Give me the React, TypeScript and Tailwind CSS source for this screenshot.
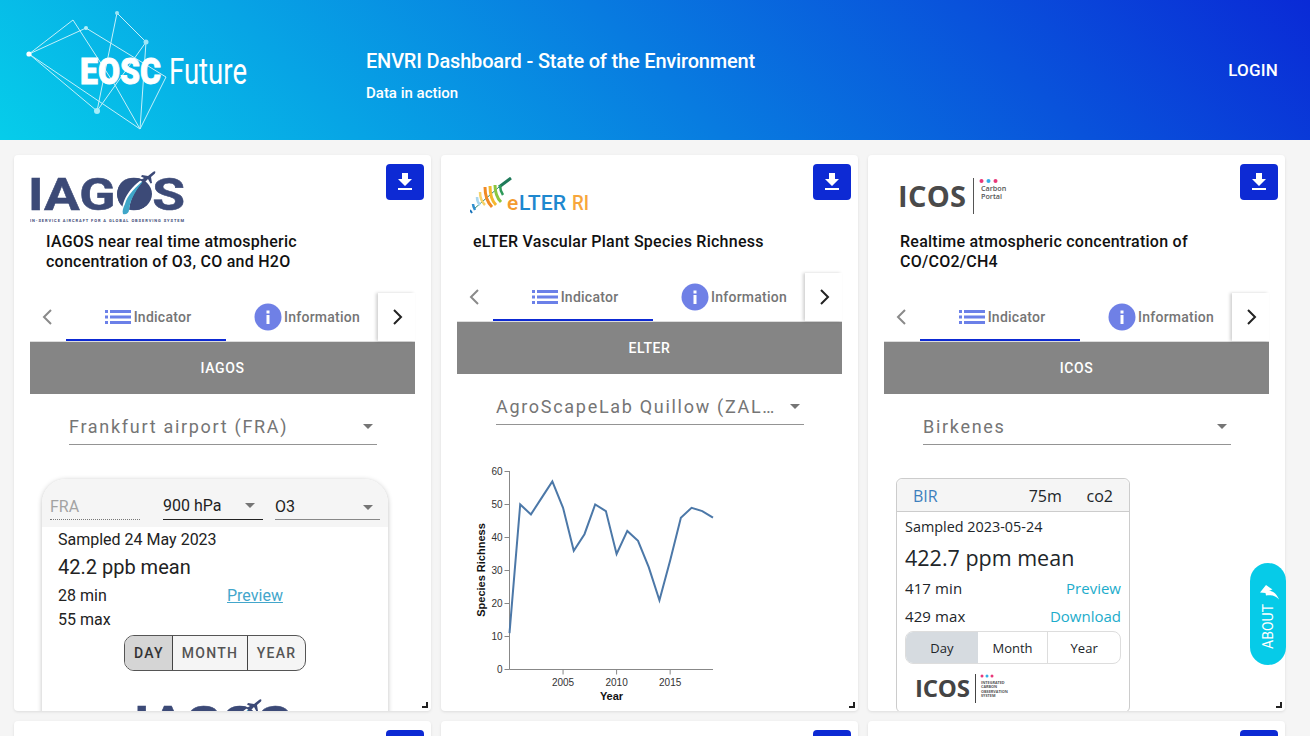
function DownloadButton() {
  return (
    <button className="absolute right-[7px] top-[9px] flex h-[36px] w-[38px] items-center justify-center rounded-[4px] bg-[#0d2ad4]">
      <svg width="24" height="24" viewBox="0 0 24 24" fill="#fff">
        <path d="M19 9h-4V3H9v6H5l7 7 7-7zM5 18v2h14v-2H5z" />
      </svg>
    </button>
  )
}

function EoscLogo() {
  const lines = [
    [29, 54, 73, 20], [29, 54, 86, 28], [29, 54, 97, 111], [29, 54, 140, 129],
    [73, 20, 115, 85], [115, 85, 140, 129], [86, 28, 166, 77], [166, 77, 140, 129],
    [117, 13, 146, 42], [117, 13, 97, 111], [146, 42, 97, 111], [146, 42, 140, 129],
  ]
  return (
    <svg width="366" height="140" className="shrink-0">
      {lines.map((l, i) => (
        <line key={i} x1={l[0]} y1={l[1]} x2={l[2]} y2={l[3]} stroke="#c4f0fa" strokeWidth="1" />
      ))}
      <circle cx="29" cy="54" r="2.6" fill="#fff" />
      <circle cx="86" cy="28" r="2" fill="#b5eef9" />
      <circle cx="117" cy="13" r="2" fill="#9fe5f6" />
      <circle cx="146" cy="42" r="2.5" fill="#9fe5f6" />
      <circle cx="97" cy="111" r="3" fill="#a7edf9" />
      <text x="80" y="84" fill="#fff" stroke="#fff" strokeWidth="0.8" fontFamily="Roboto" fontWeight="900" fontSize="36" textLength="81" lengthAdjust="spacingAndGlyphs">EOSC</text>
      <text x="169" y="84" fill="#fff" fontFamily="Roboto" fontWeight="400" fontSize="37" textLength="78" lengthAdjust="spacingAndGlyphs">Future</text>
    </svg>
  )
}

function IagosLogo() {
  return (
    <svg width="160" height="56" className="block">
      <text x="-2" y="41" fill="#3c4a77" stroke="#3c4a77" strokeWidth="0.5" fontFamily="Roboto" fontWeight="700" fontSize="44" textLength="157" lengthAdjust="spacingAndGlyphs">IAGOS</text>
      <ellipse cx="104.500" cy="25" rx="17.500" ry="16" fill="#3c4a77" />
      <path d="M117 8 C103 14 91 30 92 45 L99 43 C99 31 106 18 117 8Z" fill="#fff" />
      <path d="M116 9 C106 18 97 26 95 35 C93 39 92 42 93 45 C96 46 99 44 99 41 C100 30 107 19 116 9Z" fill="#3fa6c8" />
      <path d="M112 6 L118 7 L123 3 C125 1.500 126 2.500 125 4.500 L121 8 L122 14 L120.500 14.500 L118 10 L115 13 L115 15 L113.500 14.500 L112 12.500 L110 11.500 L114 9 L111 7.500Z" fill="#3c4a77" />
      <text x="0" y="53" fill="#3c4a77" fontFamily="Roboto" fontWeight="700" fontSize="4" textLength="154" lengthAdjust="spacing">IN-SERVICE AIRCRAFT FOR A GLOBAL OBSERVING SYSTEM</text>
    </svg>
  )
}

function ElterLogo() {
  return (
    <svg width="130" height="40" className="block">
      <path d="M41 1 L29 10" stroke="#1f7a5a" strokeWidth="3" fill="none" />
      <path d="M29 10 L4 32" stroke="#2a8a6a" strokeWidth="1" fill="none" />
      <path d="M30 8 C30 12 31 15 33 18" stroke="#2f9a5a" strokeWidth="2.500" fill="none" />
      <path d="M25 8 C25 15 27 21 31 25" stroke="#8cc63f" strokeWidth="3" fill="none" />
      <path d="M20 9 C20 17 22 24 26 28" stroke="#f5b82e" strokeWidth="3" fill="none" />
      <path d="M15 10 C15 19 18 26 22 30" stroke="#f08a24" strokeWidth="3" fill="none" />
      <path d="M10 15 C10 21 12 25 15 28" stroke="#f6d36a" strokeWidth="2.500" fill="none" />
      <path d="M7 20 C7 24 8 26 10 28" stroke="#a9d6ee" strokeWidth="2.500" fill="none" />
      <path d="M3 27 C3 29 4 31 5 33" stroke="#2f8fcf" strokeWidth="2.500" fill="none" />
      <path d="M0 33 L2 36" stroke="#1b75bb" strokeWidth="2" />
      <text x="37" y="32.500" fontFamily="Roboto" fontWeight="500" fontSize="21" fill="#f39a2e">e</text>
      <text x="49" y="32.500" fontFamily="Roboto" fontWeight="500" fontSize="21" fill="#1e88cf" textLength="47" lengthAdjust="spacingAndGlyphs">LTER</text>
      <text x="102" y="32.500" fontFamily="Roboto" fontWeight="500" fontSize="21" fill="#f7a63c" textLength="17" lengthAdjust="spacingAndGlyphs">RI</text>
    </svg>
  )
}

function IcosLogo() {
  return (
    <svg width="130" height="44" className="block">
      <text x="0" y="30" fontFamily="Open Sans" fontWeight="700" fontSize="29" fill="#4a4a4a" textLength="68" lengthAdjust="spacing">ICOS</text>
      <line x1="75.500" y1="1" x2="75.500" y2="37" stroke="#555" strokeWidth="1" />
      <circle cx="83.500" cy="4" r="2" fill="#e8387a" />
      <circle cx="90.500" cy="4" r="2" fill="#35aee8" />
      <circle cx="97.500" cy="4" r="2" fill="#e8387a" />
      <text x="83" y="13.500" fontFamily="Open Sans" fontWeight="600" fontSize="7.200" fill="#555">Carbon</text>
      <text x="83" y="21.500" fontFamily="Open Sans" fontWeight="600" fontSize="7.200" fill="#555">Portal</text>
    </svg>
  )
}

function IcosSmallLogo() {
  return (
    <svg width="110" height="34" className="block">
      <text x="0" y="24" fontFamily="Open Sans" fontWeight="700" fontSize="24" fill="#444" textLength="55" lengthAdjust="spacing">ICOS</text>
      <line x1="60.500" y1="1" x2="60.500" y2="30" stroke="#444" strokeWidth="1" />
      <circle cx="67" cy="3" r="1.500" fill="#e8387a" />
      <circle cx="72" cy="3" r="1.500" fill="#35aee8" />
      <circle cx="77" cy="3" r="1.500" fill="#e8387a" />
      {["INTEGRATED", "CARBON", "OBSERVATION", "SYSTEM"].map((t, i) => (
        <text key={t} x="66" y={10.500 + i * 4.500} fontFamily="Open Sans" fontWeight="700" fontSize="3.800" fill="#555">{t}</text>
      ))}
    </svg>
  )
}

function Tabs() {
  return (
    <div className="flex h-[49px] items-stretch border-b border-[#ddd] text-[14px] font-medium tracking-[0.25px] text-[#757575]">
      <div className="flex w-[36px] items-center justify-center">
        <svg width="24" height="24" viewBox="0 0 24 24" fill="none" stroke="#8a8a8a" strokeWidth="2"><path d="M15 5 L8 12 L15 19" /></svg>
      </div>
      <div className="flex w-[160px] items-center justify-center gap-[3px] border-b-2 border-[#0d2ad4] pl-[4px] pt-[2px]">
        <svg width="26" height="16" viewBox="0 0 26 16" fill="#6b80e8">
          <rect x="0" y="1" width="3" height="3" /><rect x="0" y="6.500" width="3" height="3" /><rect x="0" y="12" width="3" height="3" />
          <rect x="5" y="1" width="21" height="3" /><rect x="5" y="6.500" width="21" height="3" /><rect x="5" y="12" width="21" height="3" />
        </svg>
        Indicator
      </div>
      <div className="flex w-[152px] items-center justify-start gap-[2px] pl-[28px]">
        <svg width="28" height="28" viewBox="0 0 28 28" className="shrink-0">
          <circle cx="14" cy="14" r="13.500" fill="#6f80e6" />
          <rect x="12.500" y="12" width="3" height="9" fill="#fff" />
          <rect x="12.500" y="7.500" width="3" height="3" fill="#fff" />
        </svg>
        Information
      </div>
      <div className="flex w-[37px] items-center justify-center shadow-[-2px_0_3px_rgba(0,0,0,0.18)]">
        <svg width="24" height="24" viewBox="0 0 24 24" fill="none" stroke="#222" strokeWidth="2"><path d="M9 5 L16 12 L9 19" /></svg>
      </div>
    </div>
  )
}

function Caret({ color = "#757575" }: { color?: string }) {
  return (
    <svg width="10" height="5" viewBox="0 0 10 5" className="shrink-0"><path d="M0 0 L10 0 L5 5Z" fill={color} /></svg>
  )
}

function SiteSelect({ label }: { label: string }) {
  return (
    <div className="ml-[39px] mr-[38px] mt-[16px] flex h-[35px] items-center justify-between border-b border-[#949494] pb-[2px] pr-[4px] text-[18px] tracking-[1.7px] text-[#757575]">
      <span className="w-[280px] truncate">{label}</span>
      <Caret />
    </div>
  )
}

function Card({ logo, title, children }: { logo?: React.ReactNode; title?: React.ReactNode; children?: React.ReactNode }) {
  return (
    <div className="relative h-[556px] overflow-hidden rounded-[4px] bg-white px-[16px] shadow-[0_1px_3px_rgba(0,0,0,0.1)]">
      <DownloadButton />
      <div className="h-[77px]">{logo}</div>
      {title && (
        <div className="mb-[21px] w-[320px] pl-[16px] text-[16px] font-medium leading-[20px] tracking-[0.25px] text-[#111]">{title}</div>
      )}
      {children}
      <div className="absolute bottom-[3px] right-[3px] h-[6px] w-[6px] border-b-2 border-r-2 border-[#222]" />
    </div>
  )
}

function IagosWidget() {
  return (
    <div className="ml-[12px] mt-[34px] w-[346px] rounded-t-[24px] bg-white pb-[40px] text-[16px] text-[#222] shadow-[0_1px_5px_rgba(0,0,0,0.25)]">
      <div className="flex h-[48px] items-end rounded-t-[24px] bg-[#f5f5f5] pb-[7px]">
        <div className="ml-[8px] w-[90px] border-b border-dotted border-[#777] pb-[1px] leading-[22px] text-[#a3a3a3]">FRA</div>
        <div className="ml-[23px] flex w-[100px] items-center justify-between border-b border-[#222] pb-[2px] pr-[8px] leading-[23px]">
          900 hPa
          <Caret />
        </div>
        <div className="ml-[12px] flex w-[105px] items-center justify-between border-b border-[#888] pb-[1px] pr-[7px] leading-[22px]">
          O3
          <Caret />
        </div>
      </div>
      <div className="pl-[16px]">
        <div className="h-[24px] pt-[1px] leading-[24px]">Sampled 24 May 2023</div>
        <div className="h-[32px] text-[20px] leading-[32px]">42.2 ppb mean</div>
        <div className="flex h-[24px] pt-[1px] leading-[24px]">
          <span className="w-[169px]">28 min</span>
          <span className="text-[#43a6cb] underline">Preview</span>
        </div>
        <div className="h-[24px] pt-[1px] leading-[24px]">55 max</div>
      </div>
      <div className="mt-[4px] flex justify-center">
        <div className="flex h-[36px] overflow-hidden rounded-[10px] border border-[#555] bg-[#f5f5f5] text-[14px] font-medium tracking-[1.25px] text-[#555]">
          <span className="flex w-[48px] items-center justify-center border-r border-[#444] bg-[#d5d5d5] pl-[1px] text-[#333]">DAY</span>
          <span className="flex w-[75px] items-center justify-center border-r border-[#444]">MONTH</span>
          <span className="flex w-[57px] items-center justify-center">YEAR</span>
        </div>
      </div>
      <div className="ml-[94px] mt-[26px]">
        <IagosLogo />
      </div>
    </div>
  )
}

function IcosWidget() {
  return (
    <div className="ml-[12px] mt-[33px] h-[235px] w-[234px] rounded-[6px] border border-[#ccc] font-['Open_Sans',sans-serif] text-[14.400px] text-[#212529]">
      <div className="flex h-[33px] items-center rounded-t-[6px] border-b border-[#ccc] bg-[#f5f5f5] pl-[16px] pr-[16px] pt-[1px] text-[16px]">
        <span className="w-[116px] text-[#3d7fbd]">BIR</span>
        <span className="w-[58px]">75m</span>
        <span>co2</span>
      </div>
      <div className="px-[8px]">
        <div className="h-[30px] leading-[30px]">Sampled 2023-05-24</div>
        <div className="h-[31px] text-[21.500px] leading-[32px]">422.7 ppm mean</div>
        <div className="flex h-[30px] items-center justify-between text-[15px] leading-[24px]">
          <span className="tracking-[0.1px]">417 min</span>
          <span className="text-[#1caccb]">Preview</span>
        </div>
        <div className="flex h-[26px] items-center justify-between text-[15px] leading-[24px]">
          <span className="tracking-[0.1px]">429 max</span>
          <span className="text-[#1caccb]">Download</span>
        </div>
        <div className="mt-[2px] flex h-[33px] overflow-hidden rounded-[8px] border border-[#ddd] text-[13px]">
          <span className="flex w-[72px] items-center justify-center bg-[#d6dbe0] pt-[2px]">Day</span>
          <span className="flex w-[71px] items-center justify-center border-r border-[#ddd] pt-[2px]">Month</span>
          <span className="flex w-[72px] items-center justify-center pt-[2px]">Year</span>
        </div>
        <div className="ml-[10px] mt-[9px]">
          <IcosSmallLogo />
        </div>
      </div>
    </div>
  )
}

const richness = [11, 50, 47, 52, 57, 49, 36, 41, 50, 48, 35, 42, 39, 31, 21, 33, 46, 49, 48, 46]

function RichnessChart() {
  const x0 = 49.5
  const y0 = 219.5
  const pts = richness.map((v, i) => `${x0 + i * 10.71},${y0 - v * 3.3}`).join(" ")
  return (
    <svg width="270" height="260" className="ml-[3px] mt-[25px] block" fontFamily="Liberation Sans" fontSize="10" fill="#333">
      <line x1={x0} y1="21" x2={x0} y2={y0} stroke="#888" />
      <line x1={x0} y1={y0} x2="253" y2={y0} stroke="#888" />
      {[0, 10, 20, 30, 40, 50, 60].map((v) => (
        <g key={v}>
          <line x1={x0 - 5} x2={x0} y1={y0 - v * 3.3} y2={y0 - v * 3.3} stroke="#888" />
          <text x={x0 - 7} y={y0 - v * 3.3 + 3.5} textAnchor="end">{v}</text>
        </g>
      ))}
      {[2005, 2010, 2015].map((v) => (
        <g key={v}>
          <line x1={x0 + (v - 2000) * 10.71} x2={x0 + (v - 2000) * 10.71} y1={y0} y2={y0 + 5} stroke="#888" />
          <text x={x0 + (v - 2000) * 10.71} y={y0 + 16} textAnchor="middle">{v}</text>
        </g>
      ))}
      <polyline points={pts} fill="none" stroke="#4c78a8" strokeWidth="2" />
      <text x="151.500" y="250" textAnchor="middle" fontWeight="700" fontSize="11" fill="#111">Year</text>
      <text transform="translate(25,120) rotate(-90)" textAnchor="middle" fontWeight="700" fontSize="11" fill="#111">Species Richness</text>
    </svg>
  )
}

function Banner({ label }: { label: string }) {
  return (
    <div className="flex h-[52px] items-center justify-center bg-[#858585] text-[14px] font-medium tracking-[0.6px] text-white">{label}</div>
  )
}

export default function App() {
  return (
    <div className="relative h-[736px] overflow-hidden bg-[#f5f5f5] font-[Roboto,sans-serif]">
      <header className="flex h-[140px] items-center bg-[linear-gradient(45deg,#06cdea_0%,#0a2ad6_100%)] pr-[32px] text-white">
        <EoscLogo />
        <div className="pt-[11px]">
          <div className="text-[20px] font-medium leading-[24px] tracking-[-0.18px]">ENVRI Dashboard - State of the Environment</div>
          <div className="mt-[10px] text-[15px] font-medium leading-[20px]">Data in action</div>
        </div>
        <div className="ml-auto text-[17px] font-medium leading-[20px] tracking-[0.2px]">LOGIN</div>
      </header>

      <div className="grid grid-cols-[repeat(3,417px)] gap-[10px] pl-[14px] pt-[15px]">
        <Card
          logo={<div className="pt-[14px]"><IagosLogo /></div>}
          title={<>IAGOS near real time atmospheric concentration of O3, CO and H2O</>}
        >
          <Tabs />
          <Banner label="IAGOS" />
          <SiteSelect label="Frankfurt airport (FRA)" />
          <IagosWidget />
        </Card>
        <Card
          logo={<div className="pl-[13px] pt-[22px]"><ElterLogo /></div>}
          title="eLTER Vascular Plant Species Richness"
        >
          <Tabs />
          <Banner label="ELTER" />
          <SiteSelect label="AgroScapeLab Quillow (ZALF)" />
          <RichnessChart />
        </Card>
        <Card
          logo={<div className="pl-[14px] pt-[22px]"><IcosLogo /></div>}
          title={<>Realtime atmospheric concentration of CO/CO2/CH4</>}
        >
          <Tabs />
          <Banner label="ICOS" />
          <SiteSelect label="Birkenes" />
          <IcosWidget />
        </Card>
        <Card />
        <Card />
        <Card />
      </div>

      <div className="absolute left-[1250px] top-[563px] flex h-[102px] w-[36px] flex-col items-center justify-start rounded-full bg-[#06cbe8] pt-[22px] text-white">
        <svg width="20" height="15" viewBox="0 0 20 15" fill="#fff" className="ml-[4px]">
          <path d="M6 0 L12.500 4.500 L9 5.500 C13 6 17 9 19 14.500 C16 11 12 9.500 6 10.500 L5.500 8 L0 7.500 Z" />
        </svg>
        <span className="mt-[4px] rotate-180 text-[14px] leading-[18px] [writing-mode:vertical-rl]">ABOUT</span>
      </div>
    </div>
  )
}
